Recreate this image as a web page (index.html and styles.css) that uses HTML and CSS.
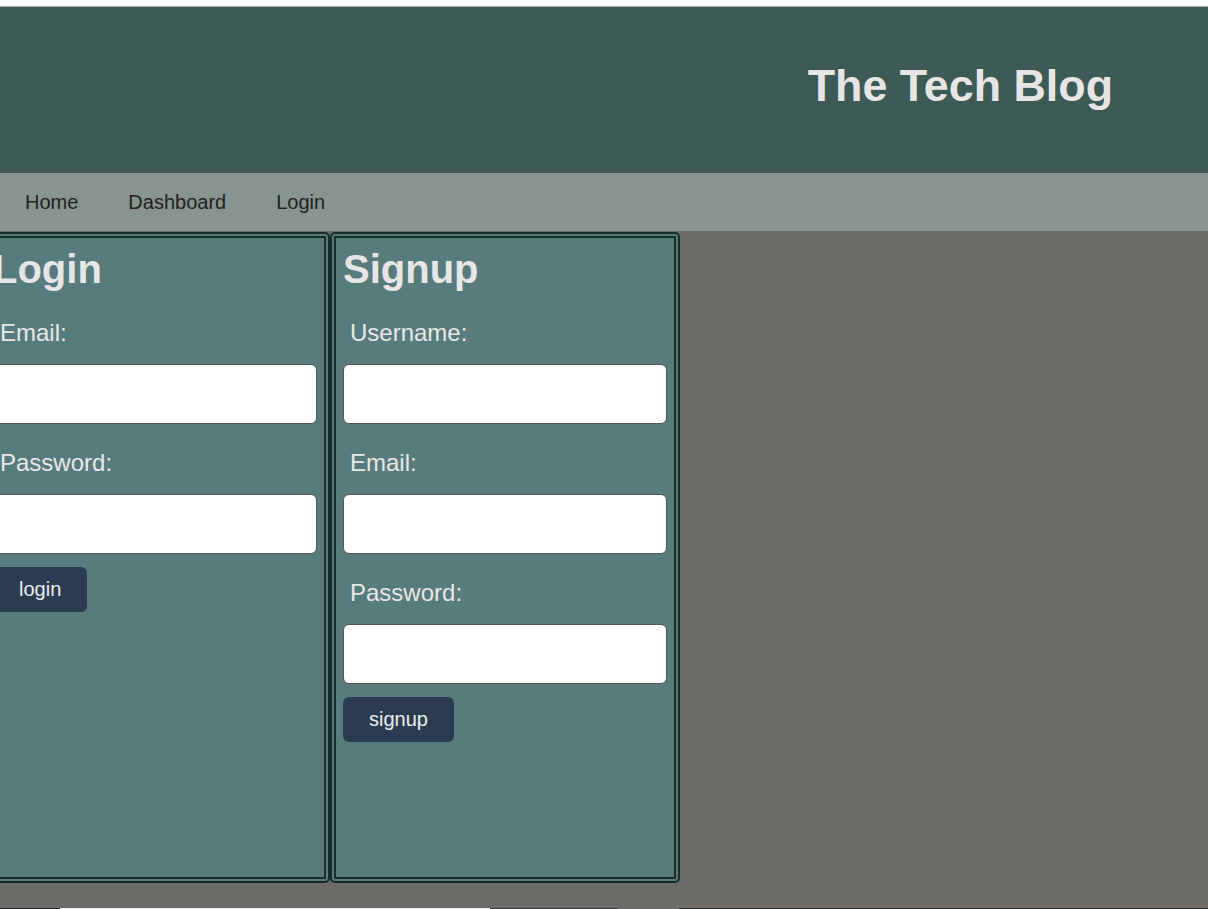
FILE: index.html
```html
<!DOCTYPE html>
<html lang="en">
<head>
<meta charset="utf-8">
<title>The Tech Blog</title>
<link rel="stylesheet" href="styles.css">
</head>
<body>
<div class="topstrip"></div>
<header class="site-header">
  <h1 class="site-title">The Tech Blog</h1>
</header>
<nav class="site-nav">
  <a class="nav-link" href="#">Home</a>
  <a class="nav-link" href="#">Dashboard</a>
  <a class="nav-link" href="#">Login</a>
</nav>
<main class="content">
  <div class="cards">
    <section class="card">
      <h2 class="card-title">Login</h2>
      <form class="form">
        <div class="field">
          <label class="field-label">Email:</label>
          <input class="field-input" type="text">
        </div>
        <div class="field">
          <label class="field-label">Password:</label>
          <input class="field-input" type="password">
        </div>
        <button class="btn" type="button">login</button>
      </form>
    </section>
    <section class="card">
      <h2 class="card-title">Signup</h2>
      <form class="form">
        <div class="field">
          <label class="field-label">Username:</label>
          <input class="field-input" type="text">
        </div>
        <div class="field">
          <label class="field-label">Email:</label>
          <input class="field-input" type="text">
        </div>
        <div class="field">
          <label class="field-label">Password:</label>
          <input class="field-input" type="password">
        </div>
        <button class="btn" type="button">signup</button>
      </form>
    </section>
  </div>
</main>
<div class="bottomstrip"></div>
</body>
</html>
```

FILE: styles.css
```css
html, body {
  margin: 0;
  padding: 0;
  overflow: hidden;
}

body {
  font-family: "Liberation Sans", Arial, sans-serif;
  background: #ffffff;
  width: 1208px;
  height: 909px;
}

.topstrip {
  height: 6px;
  background: #ffffff;
  border-bottom: 1px solid #a3a3a3;
}

.site-header {
  height: 166px;
  box-sizing: border-box;
  background: #3e5a54;
  display: flex;
  justify-content: flex-end;
  align-items: flex-start;
  padding: 52px 95px 0 0;
}

.site-title {
  margin: 0;
  font-size: 44.8px;
  font-weight: bold;
  color: #e6e6e6;
  line-height: 52px;
}

.site-nav {
  height: 58px;
  background: #88948f;
  display: flex;
  align-items: center;
  gap: 50px;
  padding-left: 25px;
}

.nav-link {
  font-size: 20px;
  line-height: 23px;
  color: #231f1f;
  text-decoration: none;
}

.content {
  height: 677px;
  background: #6c6b67;
  box-sizing: border-box;
  padding-top: 1px;
}

.cards {
  display: flex;
  margin-left: -20px;
}

.card {
  width: 350px;
  height: 651px;
  box-sizing: border-box;
  background: #587b7b;
  border: 6px double #1a2e29;
  border-radius: 5px;
  padding: 8px 7px 0 7px;
}

.card-title {
  margin: 0 0 27px 0;
  font-size: 40px;
  line-height: 46px;
  font-weight: bold;
  color: #e6e6e6;
}

.form {
  display: flex;
  flex-direction: column;
  align-items: flex-start;
}

.field {
  display: flex;
  flex-direction: column;
  width: 100%;
}

.field + .field {
  margin-top: 12px;
}

.field-label {
  font-size: 24px;
  line-height: 28px;
  color: #e8e8e8;
  padding-left: 7px;
  margin-bottom: 17px;
}

.field-input {
  width: 324px;
  height: 60px;
  box-sizing: border-box;
  background: #ffffff;
  border: 1px solid #555555;
  border-radius: 6px;
  margin: 0 0 13px 0;
  font-size: 20px;
  font-family: inherit;
}

.btn {
  height: 45px;
  padding: 0 26px;
  border: none;
  border-radius: 6px;
  background: #2c3c50;
  color: #e8eef0;
  font-size: 20px;
  font-family: inherit;
  line-height: 23px;
}

.bottomstrip {
  height: 1px;
  background: linear-gradient(to right,
    #2e2e2e 0, #2e2e2e 60px,
    #eeeeee 60px, #eeeeee 490px,
    #3a3a3a 490px, #3a3a3a 618px,
    #6c6b67 618px, #6c6b67 679px,
    #2e3236 679px, #2e3236 100%);
}
```
